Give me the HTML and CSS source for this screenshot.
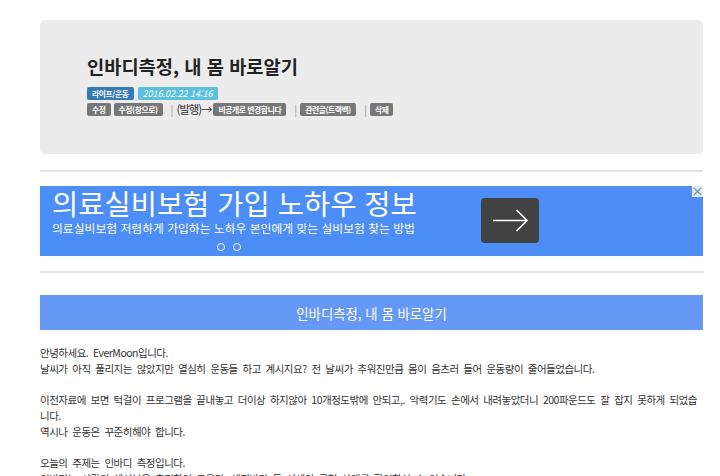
FILE: index.html
```html
<!DOCTYPE html>
<html lang="ko">
<head>
    <meta charset="UTF-8">
    <meta name="viewport" content="width=device-width, initial-scale=1.0">
    <title>인바디측정, 내 몸 바로알기</title>
    <link rel="stylesheet" href="styles.css">
</head>
<body><div class="page">
    <div class="post-head">
        <h1 class="post-title">인바디측정, 내 몸 바로알기</h1>
        <div class="meta">
            <span class="label label-cat">라이프/운동</span><span class="label label-date">2016.02.22 14:16</span>
        </div>
        <div class="admin">
            <span class="label label-gray">수정</span>
            <span class="label label-gray">수정(창으로)</span>
            <span class="sep">|</span>
            <span class="state">(발행)→</span><span class="label label-gray">비공개로 변경합니다</span>
            <span class="sep">|</span>
            <span class="label label-gray">관련글(트랙백)</span>
            <span class="sep">|</span>
            <span class="label label-gray">삭제</span>
        </div>
    </div>

    <hr class="rule">

    <div class="ad">
        <div class="ad-text">
            <div class="ad-title">의료실비보험 가입 노하우 정보</div>
            <div class="ad-desc">의료실비보험 저렴하게 가입하는 노하우 본인에게 맞는 실비보험 찾는 방법</div>
            <div class="ad-dots"><span class="dot"></span><span class="dot"></span></div>
        </div>
        <div class="ad-btn">
            <svg width="58" height="45" viewBox="0 0 58 45">
                <line x1="12" y1="22.5" x2="46" y2="22.5" stroke="#fff" stroke-width="1.6"/>
                <polyline points="35.5,12 46,22.5 35.5,33" fill="none" stroke="#fff" stroke-width="1.6"/>
            </svg>
        </div>
        <span class="ad-close">
            <svg width="11" height="11" viewBox="0 0 11 11">
                <path d="M2 2 L9 9 M9 2 L2 9" stroke="#6f9aa6" stroke-width="1.2"/>
            </svg>
        </span>
    </div>

    <hr class="rule">

    <h2 class="article-heading">인바디측정, 내 몸 바로알기</h2>

    <div class="article-body">
        <p>안녕하세요. EverMoon입니다.</p>
        <p>날씨가 아직 풀리지는 않았지만 열심히 운동들 하고 계시지요? 전 날씨가 추워진만큼 몸이 움츠러 들어 운동량이 줄어들었습니다.</p>
        <p>&nbsp;</p>
        <p>이전자료에 보면 턱걸이 프로그램을 끝내놓고 더이상 하지않아 10개정도밖에 안되고,. 악력기도 손에서 내려놓았더니 200파운드도 잘 잡지 못하게 되었습니다.</p>
        <p>역시나 운동은 꾸준히해야 합니다.</p>
        <p>&nbsp;</p>
        <p>오늘의 주제는 인바디 측정입니다.</p>
        <p>인바디는 사람의 체성분을 측정하여 근육량, 체지방량 등 신체의 균형 상태를 확인하실 수 있습니다.</p>
    </div>
</div>
</body>
</html>
```

FILE: styles.css
```css
* {
    margin: 0;
    padding: 0;
    box-sizing: border-box;
}
body {
    font-family: "Noto Sans CJK KR", "Noto Sans", sans-serif;
    background: #fff;
    color: #333;
}
.page {
    width: 703px;
    padding: 20px 0 0 40px;
}

/* post header */
.post-head {
    background: #ececec;
    border-radius: 5px;
    height: 134px;
    padding: 34px 0 0 47px;
}
.post-title {
    font-size: 18.7px;
    line-height: 24px;
    font-weight: bold;
    color: #222;
}
.meta {
    display: flex;
    margin-top: 9px;
    gap: 4px;
}
.admin {
    display: flex;
    align-items: center;
    margin-top: 3px;
    height: 13px;
}
.label {
    display: inline-block;
    height: 13px;
    line-height: 13px;
    padding: 0 5px;
    border-radius: 2px;
    font-size: 7.8px;
    font-weight: bold;
    letter-spacing: -0.4px;
    color: #fff;
    white-space: nowrap;
}
.label-cat { background: #337ab7; }
.label-date {
    background: #5bc0de;
    font-size: 9px;
    font-weight: normal;
    font-style: italic;
    letter-spacing: 0;
    padding: 0 5px;
}
.label-gray { background: #777; margin-right: 3px; }
.sep {
    color: #999;
    font-size: 11px;
    line-height: 13px;
    margin: 0 3px 0 5px;
}
.state {
    font-size: 11.5px;
    line-height: 13px;
    letter-spacing: -1.1px;
    color: #333;
    margin-right: 2px;
}

.rule {
    border: none;
    height: 2px;
    background: #e3e3e3;
    width: 663px;
}
.rule:first-of-type { margin-top: 16px; }

/* ad block */
.ad {
    position: relative;
    display: flex;
    width: 663px;
    height: 70px;
    margin: 14px 0 15px;
    background: #4c8df6;
}
.ad-text {
    width: 378px;
    padding: 1px 0 0 12px;
    color: #fff;
}
.ad-title {
    font-size: 28.5px;
    line-height: 32px;
    white-space: nowrap;
}
.ad-desc {
    margin-top: 2px;
    font-size: 11.8px;
    line-height: 14px;
    white-space: nowrap;
}
.ad-dots {
    display: flex;
    justify-content: center;
    gap: 8px;
    margin-top: 8px;
    padding-right: 12px;
}
.dot {
    width: 8px;
    height: 8px;
    border: 1px solid #fff;
    border-radius: 50%;
}
.ad-btn {
    width: 58px;
    height: 45px;
    margin: 12px 0 0 63px;
    background: #424242;
    border-radius: 4px;
}
.ad-close {
    position: absolute;
    top: 0;
    right: 0;
    width: 11px;
    height: 11px;
    background: #e4ecf3;
}
.ad-close svg { display: block; }

/* article */
.article-heading {
    display: flex;
    align-items: center;
    justify-content: center;
    width: 663px;
    height: 35px;
    margin-top: 22px;
    background: #6698f5;
    color: #fff;
    font-size: 13.4px;
    font-weight: normal;
}
.article-body {
    width: 662px;
    margin-top: 15px;
    font-size: 10.5px;
    line-height: 15.75px;
    letter-spacing: -0.5px;
    word-spacing: 2.3px;
    color: #333;
}
```
